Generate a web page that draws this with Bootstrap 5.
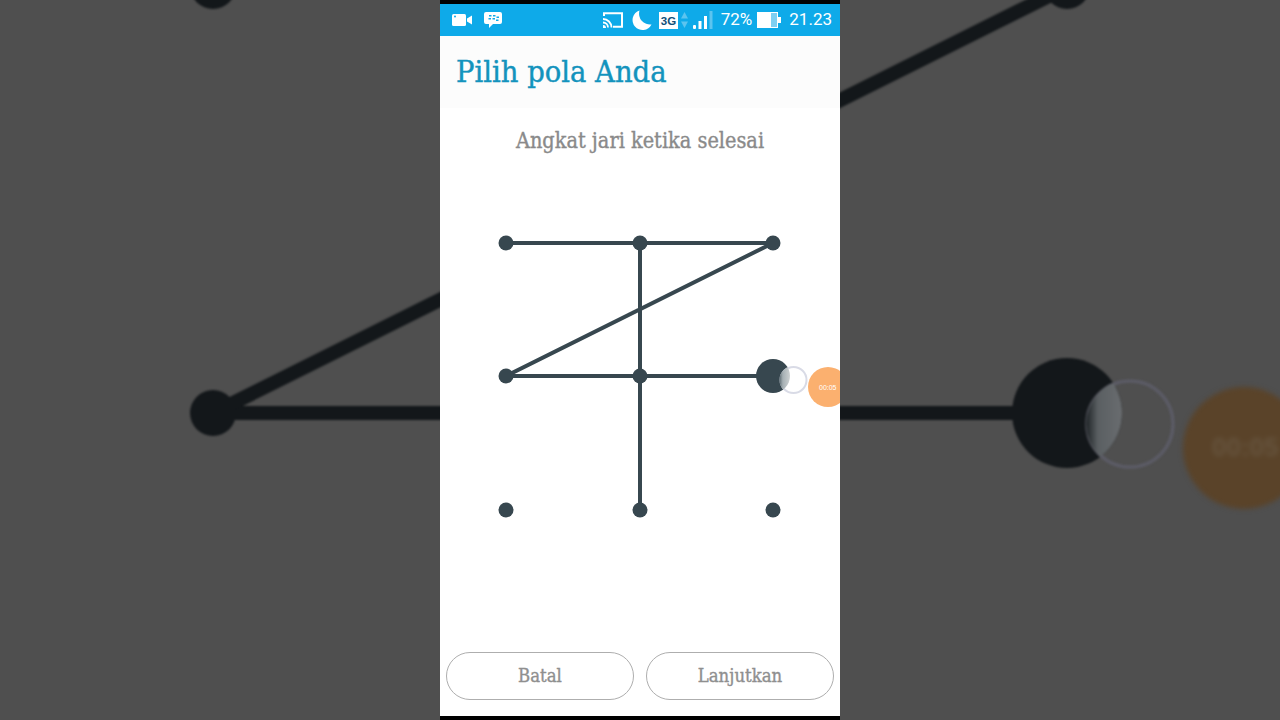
<!DOCTYPE html>
<html lang="id">
<head>
<meta charset="utf-8">
<title>Pilih pola Anda</title>
<link href="https://cdn.jsdelivr.net/npm/bootstrap@5.3.0/dist/css/bootstrap.min.css" rel="stylesheet">
<style>
html,body{height:720px;overflow:hidden}
body{background:#4f4f4f;font-family:"DejaVu Serif Condensed","DejaVu Serif",serif}
.backdrop{position:absolute;left:0;top:0;width:1280px;height:720px}
.backdrop text{font-family:"Liberation Sans",sans-serif;font-size:26px;font-weight:700;fill:#66543e}
.phone{width:400px;height:720px;background:#fff;overflow:hidden;z-index:1}
.edge{height:4px;background:#000;flex:none}
.statusbar{height:32px;background:#0eaae9;color:#fff;font-family:"Roboto",sans-serif;font-size:17px;padding:0 8px 0 12px;flex:none}
.statusbar svg{display:block;flex:none}
.cam-gap{margin-left:12px}
.r-cast{margin-right:8px}.r-moon{margin-right:7px}.r-3g{margin-right:3px}.r-arr{margin-right:5px}.r-sig{margin-right:8px}.r-pct{margin-right:5px}.r-bat{margin-right:8px}
.titlebar{height:72px;background:#fcfcfc;padding-left:16px;flex:none}
.titlebar h1{font-family:inherit;font-size:30.500px;color:#1393bd;font-weight:400;margin:0;-webkit-text-stroke:.4px #1393bd}
.hint{font-size:21.500px;color:#8a8a8a;margin-top:19px;line-height:28px;-webkit-text-stroke:.35px #8a8a8a}
.pattern{position:absolute;left:0;top:0;width:400px;height:720px}
.pattern text{font-family:"Liberation Sans",sans-serif;font-size:7px;fill:#fff}
.actions{padding:0 6px 16px;gap:12px;flex:none}
.pill{flex:1 1 0;height:48px;border:1px solid #aeaeae;border-radius:24px;background:#fff;color:#8f8f8f;font-size:18.400px;padding:0;font-family:inherit;-webkit-text-stroke:.35px #8f8f8f}
</style>
</head>
<body class="m-0 d-flex justify-content-center position-relative">
<svg class="backdrop" viewBox="0 0 1280 720" aria-hidden="true">
  <defs><filter id="soft" color-interpolation-filters="sRGB"><feGaussianBlur stdDeviation="1.200"/></filter><filter id="softer" color-interpolation-filters="sRGB"><feGaussianBlur stdDeviation="2.500"/></filter>
  <clipPath id="bigc"><circle cx="1067" cy="413" r="55"/></clipPath>
  <linearGradient id="lensd" gradientUnits="userSpaceOnUse" x1="1087" y1="0" x2="1123" y2="0"><stop offset="0" stop-color="#23282b"/><stop offset="0.3" stop-color="#5a5f62"/><stop offset="1" stop-color="#6a6d70"/></linearGradient></defs>
  <g filter="url(#soft)">
    <line x1="213" y1="413" x2="1067" y2="413" stroke="#13171a" stroke-width="14"/>
    <line x1="213" y1="413" x2="1067" y2="-13" stroke="#13171a" stroke-width="14"/>
    <circle cx="213" cy="413" r="23" fill="#13171a"/>
    <circle cx="213" cy="-14" r="23" fill="#13171a"/>
    <circle cx="1067" cy="-14" r="23" fill="#13171a"/>
    <circle cx="1067" cy="413" r="55" fill="#13171a"/>
    <circle cx="1130" cy="424" r="43" fill="none" stroke="#5b5b65" stroke-width="3.500"/>
    <circle cx="1130" cy="424" r="44" fill="url(#lensd)" clip-path="url(#bigc)"/>
  </g>
  <g filter="url(#softer)">
    <circle cx="1244" cy="448" r="61" fill="#5a4329"/>
    <text x="1212" y="456">00:05</text>
  </g>
</svg>
<main class="phone d-flex flex-column position-relative">
  <div class="edge"></div>
  <div class="statusbar d-flex align-items-center">
    <svg width="20" height="12" viewBox="0 0 20 12"><rect x="0" y="0" width="14" height="12" rx="1.500" fill="#fff"/><path d="M15 4.500 20 1.500V10.500L15 7.500Z" fill="#fff"/><circle cx="3" cy="2.500" r="1" fill="#0eaae9"/></svg>
    <svg class="cam-gap" width="18" height="16" viewBox="0 0 18 16"><path d="M2 0H16A2 2 0 0 1 18 2V10A2 2 0 0 1 16 12H9L5 16V12H2A2 2 0 0 1 0 10V2A2 2 0 0 1 2 0Z" fill="#fff"/><g fill="#0eaae9"><rect x="5" y="3" width="2.500" height="1.500"/><rect x="9" y="3" width="2.500" height="1.500"/><rect x="4.500" y="6" width="2.500" height="1.500"/><rect x="8.500" y="6" width="2.500" height="1.500"/><rect x="12.500" y="4.500" width="2.500" height="1.500"/><rect x="12" y="7.500" width="2.500" height="1.500"/></g></svg>
    <div class="ms-auto d-flex align-items-center">
      <svg class="r-cast" width="20" height="16" viewBox="0 0 20 16"><path d="M1 4V1.200H19V14.800H10" fill="none" stroke="#fff" stroke-width="2"/><path d="M0 7A8.500 8.500 0 0 1 8.500 15.500M0 10.500A5 5 0 0 1 5 15.500" fill="none" stroke="#fff" stroke-width="1.800"/><path d="M0 13A3 3 0 0 1 3 16H0Z" fill="#fff"/></svg>
      <svg class="r-moon" width="21" height="21" viewBox="0 0 21 21"><path d="M8.500 0.500A10 10 0 1 0 20.500 14.500A11 11 0 0 1 8.500 0.500Z" fill="#fff"/></svg>
      <svg class="r-3g" width="19" height="17" viewBox="0 0 19 17"><rect width="19" height="17" fill="#fff"/><text x="9.500" y="13" text-anchor="middle" font-family="Liberation Sans" font-weight="700" font-size="11.500" fill="#11507a">3G</text></svg>
      <svg class="r-arr" width="7" height="16" viewBox="0 0 7 16"><path d="M3.500 0 7 6.500H0Z" fill="#5cc4ef"/><path d="M3.500 16 7 9.500H0Z" fill="#5cc4ef"/></svg>
      <svg class="r-sig" width="20" height="18" viewBox="0 0 20 18"><rect x="0" y="14" width="3" height="4" rx="1" fill="#fff"/><rect x="5.500" y="10" width="3" height="8" fill="#fff"/><rect x="11" y="5" width="3" height="13" fill="#fff"/><rect x="16.500" y="0" width="3" height="18" fill="#5cc4ef"/></svg>
      <span class="r-pct">72%</span>
      <svg class="r-bat" width="24" height="16" viewBox="0 0 24 16"><rect width="21" height="16" fill="#fff"/><rect x="14" y="1" width="6" height="14" fill="#7fd0f2"/><rect x="21" y="5" width="3" height="6" fill="#fff"/></svg>
      <span>21.23</span>
    </div>
  </div>
  <header class="titlebar d-flex align-items-center"><h1>Pilih pola Anda</h1></header>
  <p class="hint text-center mb-0">Angkat jari ketika selesai</p>
  <div class="flex-grow-1"></div>
  <div class="actions d-flex">
    <button type="button" class="btn pill">Batal</button>
    <button type="button" class="btn pill">Lanjutkan</button>
  </div>
  <div class="edge"></div>
  <svg class="pattern" viewBox="440 0 400 720" aria-hidden="true">
    <defs><clipPath id="dotc"><circle cx="773" cy="376" r="17"/></clipPath>
    <linearGradient id="lens" gradientUnits="userSpaceOnUse" x1="779" y1="0" x2="790" y2="0"><stop offset="0" stop-color="#55646b"/><stop offset="0.35" stop-color="#a6b0b4"/><stop offset="1" stop-color="#cdd1d2"/></linearGradient></defs>
    <path d="M506 243H773L506 376H773M640 243V510" fill="none" stroke="#37474f" stroke-width="4"/>
    <g fill="#37474f">
      <circle cx="506" cy="243" r="7.500"/><circle cx="640" cy="243" r="7.500"/><circle cx="773" cy="243" r="7.500"/>
      <circle cx="506" cy="376" r="7.500"/><circle cx="640" cy="376" r="7.500"/><circle cx="773" cy="376" r="17"/>
      <circle cx="506" cy="510" r="7.500"/><circle cx="640" cy="510" r="7.500"/><circle cx="773" cy="510" r="7.500"/>
    </g>
    <circle cx="793.500" cy="380" r="13" fill="#fff" stroke="#d9dbe6" stroke-width="2"/>
    <circle cx="793.500" cy="380" r="14" fill="url(#lens)" clip-path="url(#dotc)"/>
    <circle cx="828" cy="387" r="20" fill="#fbb06f"/>
    <text x="819" y="390">00:05</text>
  </svg>
</main>
</body>
</html>
